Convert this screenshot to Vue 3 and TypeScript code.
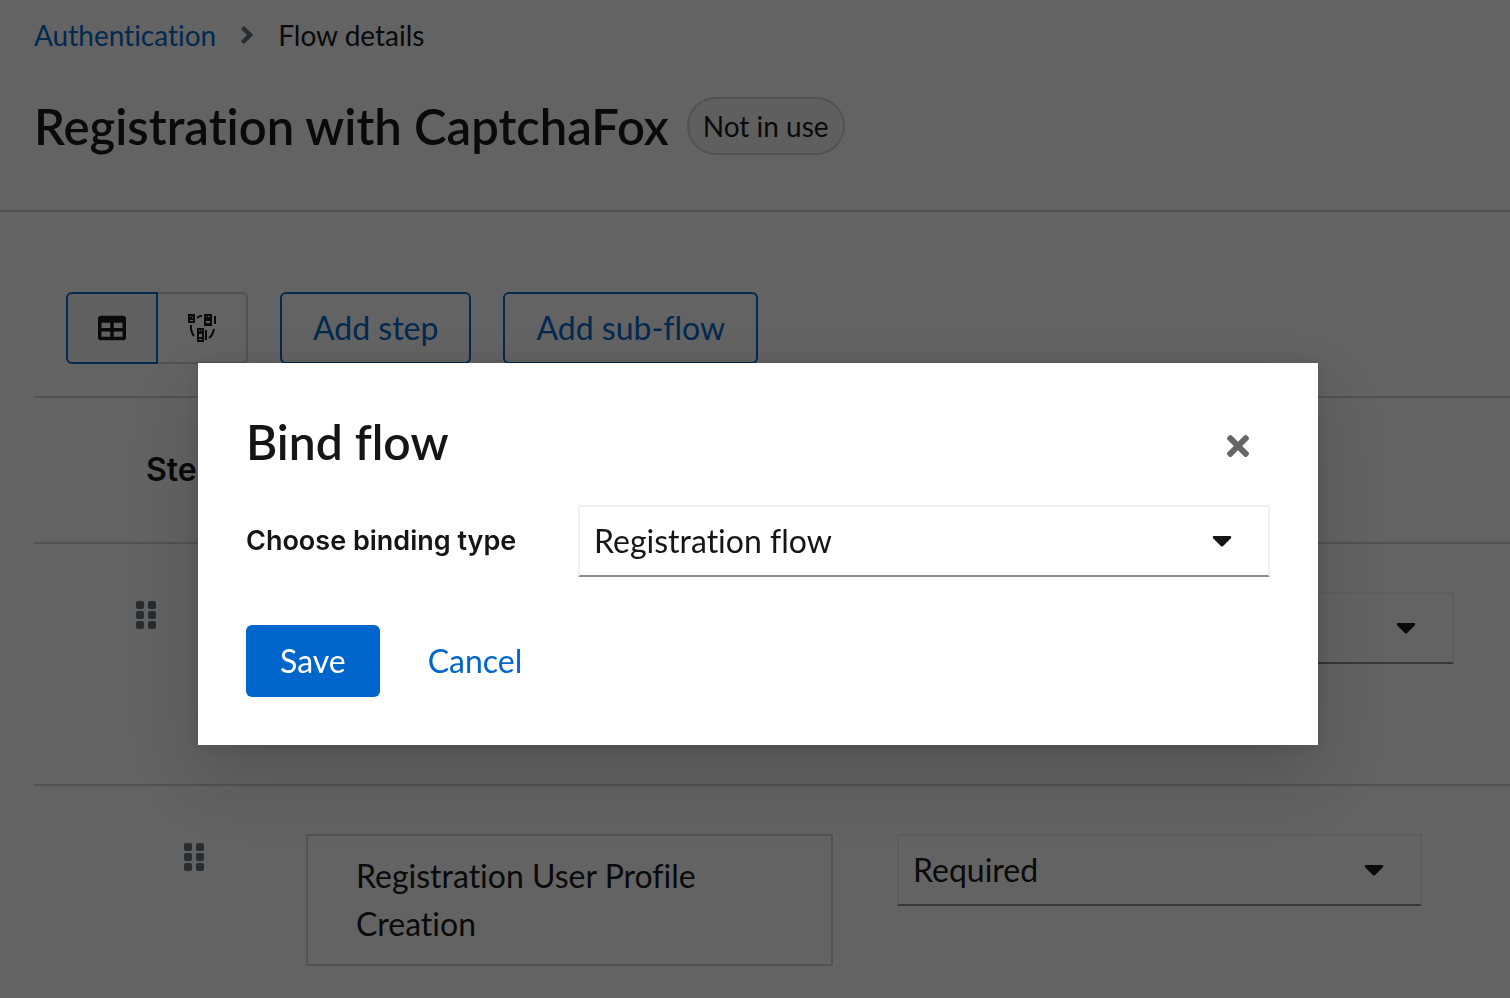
<script setup lang="ts">
import { ref } from 'vue'

interface Step {
  id: string
  level: number
  name?: string
  requirement: string
}

const steps = ref<Step[]>([
  { id: 'form', level: 0, requirement: 'Required' },
  { id: 'profile', level: 1, name: 'Registration User Profile Creation', requirement: 'Required' },
])

const bindingType = ref('Registration flow')
const gripRows = [32, 192, 352]
</script>

<template>
  <div class="page">
    <header class="page-header">
      <nav class="breadcrumb" aria-label="Breadcrumb">
        <a href="#">Authentication</a>
        <svg class="crumb-arrow" viewBox="0 0 256 512" aria-hidden="true">
          <path d="M224.3 273l-136 136c-9.4 9.4-24.6 9.4-33.9 0l-22.6-22.6c-9.4-9.4-9.4-24.6 0-33.9l96.4-96.4-96.4-96.4c-9.4-9.4-9.4-24.6 0-33.9L54.3 103c9.4-9.4 24.6-9.4 33.9 0l136 136c9.5 9.4 9.5 24.6.1 34z" />
        </svg>
        <span>Flow details</span>
      </nav>
      <div class="title-row">
        <h1>Registration with CaptchaFox</h1>
        <span class="badge">Not in use</span>
      </div>
    </header>

    <main class="content">
      <div class="toolbar">
        <div class="toggle-group">
          <button type="button" class="toggle selected" aria-label="Table view" aria-pressed="true">
            <svg class="table-icon" viewBox="0 0 512 512" aria-hidden="true">
              <path d="M464 32H48C21.49 32 0 53.49 0 80v352c0 26.51 21.49 48 48 48h416c26.51 0 48-21.49 48-48V80c0-26.51-21.49-48-48-48zM224 416H64v-96h160v96zm0-160H64v-96h160v96zm224 160H288v-96h160v96zm0-160H288v-96h160v96z" />
            </svg>
          </button>
          <button type="button" class="toggle" aria-label="Diagram view" aria-pressed="false">
            <svg class="diagram-icon" viewBox="0 0 32 32" aria-hidden="true">
              <path fill-rule="evenodd" d="M2 2h7v9H2zM4 4v1h1V4zM6 5v1h1V5zM4 8v1h3V8z" />
              <path fill-rule="evenodd" d="M18 2h8v12h-8zM20 4v1h1V4zM22 4v1h2V4zM20 9v2h4V9z" />
              <path fill-rule="evenodd" d="M11 16h7v14h-7zM13 18v1h1v-1zM15 18v1h1v-1zM13 22v3h3v-3zM13 27v1h3v-1z" />
              <path d="M28 4h2v8h-2zM19 18h2v10h-2z" />
              <path class="arc" d="M11 6l3-2h2M5 13v4q1 5 3 7M28 17q-1 6-5 9" />
            </svg>
          </button>
        </div>
        <button type="button" class="outlined">Add step</button>
        <button type="button" class="outlined">Add sub-flow</button>
      </div>

      <table class="steps">
        <colgroup>
          <col class="col-drag" />
          <col />
          <col class="col-requirement" />
        </colgroup>
        <thead>
          <tr>
            <th colspan="3" scope="col">Steps</th>
          </tr>
        </thead>
        <tbody>
          <tr v-for="step in steps" :key="step.id" :class="'level-' + step.level">
            <td class="drag">
              <svg class="grip" viewBox="0 0 320 512" role="img" aria-label="Drag to reorder">
                <template v-for="y in gripRows" :key="y">
                  <rect x="0" :y="y" width="128" height="128" rx="32" />
                  <rect x="192" :y="y" width="128" height="128" rx="32" />
                </template>
              </svg>
            </td>
            <td class="name">
              <div v-if="step.name" class="name-box">{{ step.name }}</div>
            </td>
            <td class="requirement">
              <div class="select">
                <select v-model="step.requirement" aria-label="Requirement">
                  <option>Required</option>
                </select>
                <svg class="caret" viewBox="0 0 320 512" aria-hidden="true">
                  <path d="M31.3 192h257.3c17.8 0 26.7 21.5 14.1 34.1L174.1 354.7c-7.8 7.8-20.5 7.8-28.3 0L17.2 226.1C4.6 213.5 13.4 192 31.3 192z" />
                </svg>
              </div>
            </td>
          </tr>
        </tbody>
      </table>
    </main>

    <div class="backdrop">
      <form class="modal" role="dialog" aria-modal="true" aria-labelledby="bind-title" @submit.prevent>
        <div class="modal-header">
          <h2 id="bind-title">Bind flow</h2>
          <button type="button" class="close" aria-label="Close">
            <svg viewBox="0 0 352 512" aria-hidden="true">
              <path d="M242.72 256l100.07-100.07c12.28-12.28 12.28-32.19 0-44.48l-22.24-22.24c-12.28-12.28-32.19-12.28-44.48 0L176 189.28 75.93 89.21c-12.28-12.28-32.19-12.28-44.48 0L9.21 111.45c-12.28 12.28-12.28 32.19 0 44.48L109.28 256 9.21 356.07c-12.28 12.28-12.28 32.19 0 44.48l22.24 22.24c12.28 12.28 32.2 12.28 44.48 0L176 322.72l100.07 100.07c12.28 12.28 32.2 12.28 44.48 0l22.24-22.24c12.28-12.28 12.28-32.19 0-44.48L242.72 256z" />
            </svg>
          </button>
        </div>
        <div class="field">
          <label for="binding-type">Choose binding type</label>
          <div class="select">
            <select id="binding-type" v-model="bindingType">
              <option>Registration flow</option>
            </select>
            <svg class="caret" viewBox="0 0 320 512" aria-hidden="true">
              <path d="M31.3 192h257.3c17.8 0 26.7 21.5 14.1 34.1L174.1 354.7c-7.8 7.8-20.5 7.8-28.3 0L17.2 226.1C4.6 213.5 13.4 192 31.3 192z" />
            </svg>
          </div>
        </div>
        <div class="actions">
          <button type="submit" class="primary">Save</button>
          <button type="button" class="link">Cancel</button>
        </div>
      </form>
    </div>
  </div>
</template>

<style>
body {
  margin: 0;
  background: #fff;
}
</style>

<style scoped>
.page {
  height: 100vh;
  overflow: hidden;
  color: #151515;
  background: #fff;
  font-family: Lato, "Open Sans", sans-serif;
  font-size: 32px;
  line-height: 48px;
  font-variant-ligatures: none;
}

.page *,
.page {
  box-sizing: border-box;
}

button,
select {
  margin: 0;
  font: inherit;
  font-variant-ligatures: none;
  color: inherit;
  cursor: pointer;
}

h1,
h2 {
  margin: 0;
  font-size: 48px;
  line-height: 62px;
  font-weight: 600;
}

h1 {
  font-size: 49px;
}

svg {
  display: block;
  fill: currentColor;
}

.page-header {
  padding: 14px 34px 53px;
  border-bottom: 2px solid #d2d2d2;
}

.breadcrumb {
  display: flex;
  align-items: center;
  font-size: 28px;
  line-height: 42px;
}

.breadcrumb a {
  color: #06c;
  text-decoration: none;
}

.crumb-arrow {
  width: 14px;
  height: 28px;
  margin: 0 24px;
  color: #6a6e73;
}

.title-row {
  display: flex;
  align-items: center;
  gap: 18px;
  margin-top: 39px;
}

.badge {
  padding: 6px 14px;
  border: 2px solid #d2d2d2;
  border-radius: 30px;
  background: #f5f5f5;
  font-size: 28px;
  line-height: 42px;
}

.content {
  padding: 80px 0 0 34px;
}

.toolbar {
  display: flex;
  gap: 32px;
  padding: 0 32px 32px;
}

.toggle-group {
  display: flex;
}

.toggle {
  display: flex;
  align-items: center;
  justify-content: center;
  width: 90px;
  height: 72px;
  padding: 0;
  border: 2px solid #d2d2d2;
  border-left: 0;
  border-radius: 0 6px 6px 0;
  background: transparent;
}

.toggle.selected {
  width: 92px;
  border: 2px solid #06c;
  border-radius: 6px 0 0 6px;
  background: #fafafa;
}

.table-icon {
  width: 28px;
  height: 28px;
}

.diagram-icon {
  width: 32px;
  height: 32px;
}

.arc {
  fill: none;
  stroke: currentColor;
  stroke-width: 2;
}

.outlined {
  height: 72px;
  padding: 0 31px;
  border: 2px solid #06c;
  border-radius: 6px;
  background: transparent;
  color: #06c;
}

.steps {
  width: 100%;
  border-collapse: separate;
  border-spacing: 0;
  table-layout: fixed;
}

.col-drag {
  width: 224px;
}

.col-requirement {
  width: 43.7%;
}

th {
  padding: 48px 0 48px 112px;
  border-top: 2px solid #d2d2d2;
  border-bottom: 2px solid #d2d2d2;
  text-align: left;
  font-family: Inter, "Open Sans", sans-serif;
  font-weight: 600;
}

td {
  padding: 48px 32px;
  border-bottom: 2px solid #d2d2d2;
  vertical-align: top;
}

.level-0 td {
  height: 242px;
}

.drag {
  padding-left: 102px;
}

.level-1 .drag {
  padding-left: 150px;
}

.name {
  padding-left: 48px;
}

.requirement {
  padding-right: 56px;
}

.level-1 .requirement {
  padding-right: 88px;
}

.grip {
  width: 20px;
  height: 32px;
  margin-top: 7px;
  color: #6a6e73;
}

.name-box {
  padding: 16px 48px;
  border: 2px solid #d2d2d2;
}

.select {
  position: relative;
}

.select select {
  display: block;
  width: 100%;
  height: 72px;
  padding: 0 64px 0 14px;
  appearance: none;
  border: 2px solid #f0f0f0;
  border-bottom-color: #8a8d90;
  border-radius: 0;
  background: transparent;
}

.caret {
  position: absolute;
  top: 19px;
  right: 38px;
  width: 20px;
  height: 32px;
  pointer-events: none;
}

.backdrop {
  position: fixed;
  inset: 0;
  display: flex;
  align-items: flex-start;
  justify-content: center;
  padding: 363px 0 0 6px;
  background: rgba(3, 3, 3, 0.62);
}

.modal {
  width: 1120px;
  max-width: 100%;
  padding: 48px;
  background: #fff;
  box-shadow: 0 32px 64px rgba(3, 3, 3, 0.16), 0 0 12px rgba(3, 3, 3, 0.1);
}

.modal-header {
  display: flex;
  justify-content: space-between;
  align-items: flex-end;
  margin-bottom: 32px;
}

.close {
  display: flex;
  padding: 11px 20px;
  border: 0;
  background: transparent;
  color: #666;
}

.close svg {
  width: 24px;
  height: 32px;
}

.field {
  display: grid;
  grid-template-columns: 300px 1fr;
  column-gap: 32px;
  align-items: center;
}

.field label {
  font-family: Inter, "Open Sans", sans-serif;
  font-size: 27px;
  font-weight: 600;
}

.actions {
  display: flex;
  gap: 16px;
  margin-top: 48px;
}

.primary,
.link {
  height: 72px;
  padding: 0 32px;
  border: 0;
  border-radius: 6px;
  background: transparent;
  color: #06c;
}

.primary {
  padding: 0 34px;
  background: #06c;
  color: #fff;
}
</style>
